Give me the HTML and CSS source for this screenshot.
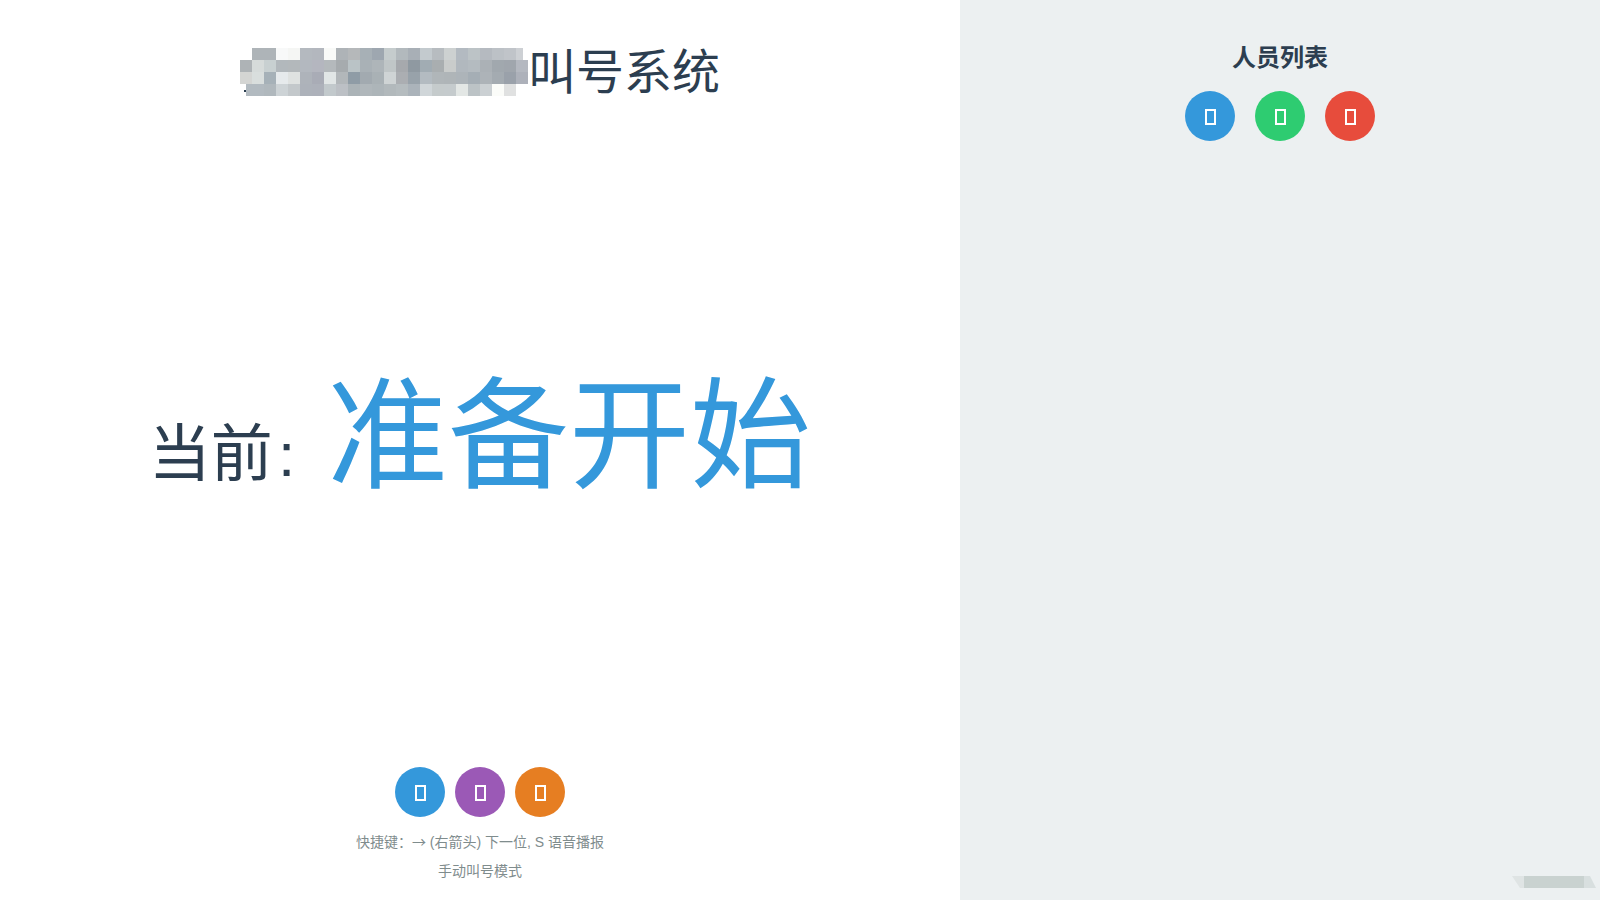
FILE: index.html
```html
<!DOCTYPE html>
<html lang="zh-CN">

<head>
  <meta charset="UTF-8" />
  <title>叫号系统</title>
  <link rel="stylesheet" href="styles.css">
</head>

<body>

  <div class="obal">
    <main class="hlavna">
      <h1 class="nadpis">
        <svg class="mozaika" width="288" height="48" viewBox="0 0 24 4" shape-rendering="crispEdges" aria-hidden="true">
          <g transform="translate(0 0)">
            <rect x="1" width="1" height="1" fill="#aeb4b8"/><rect x="2" width="1" height="1" fill="#aeb4b8"/><rect x="3" width="1" height="1" fill="#f8f9f9"/><rect x="4" width="1" height="1" fill="#f5f6f4"/><rect x="5" width="1" height="1" fill="#b4b9bf"/><rect x="6" width="1" height="1" fill="#b3b7be"/><rect x="7" width="1" height="1" fill="#f9faf8"/><rect x="8" width="1" height="1" fill="#aeb3b7"/><rect x="9" width="1" height="1" fill="#b5b8ba"/><rect x="10" width="1" height="1" fill="#a7b0b6"/><rect x="11" width="1" height="1" fill="#9ea7b0"/><rect x="12" width="1" height="1" fill="#c5cccd"/><rect x="13" width="1" height="1" fill="#b2b9bd"/><rect x="14" width="1" height="1" fill="#a8afb6"/><rect x="15" width="1" height="1" fill="#c3cace"/><rect x="16" width="1" height="1" fill="#b7bcc0"/><rect x="17" width="1" height="1" fill="#cdd1d1"/><rect x="18" width="1" height="1" fill="#b3bac1"/><rect x="19" width="1" height="1" fill="#bcc3c6"/><rect x="20" width="1" height="1" fill="#b5bac0"/><rect x="21" width="1" height="1" fill="#bcc1c6"/><rect x="22" width="1" height="1" fill="#c0c4c9"/><rect x="23" width="0.6" height="1" fill="#cdd0d4"/>
          </g>
          <g transform="translate(0 1)">
            <rect x="0" width="1" height="1" fill="#aeb3b6"/><rect x="1" width="1" height="1" fill="#d6dbda"/><rect x="2" width="1" height="1" fill="#c8d0d1"/><rect x="3" width="1" height="1" fill="#b2b8bc"/><rect x="4" width="1" height="1" fill="#b3b8bb"/><rect x="5" width="1" height="1" fill="#b3b8bf"/><rect x="6" width="1" height="1" fill="#b4b6bf"/><rect x="7" width="1" height="1" fill="#b4b9bc"/><rect x="8" width="1" height="1" fill="#a6abae"/><rect x="9" width="1" height="1" fill="#bac3c6"/><rect x="10" width="1" height="1" fill="#a9b1b6"/><rect x="11" width="1" height="1" fill="#aeb5b9"/><rect x="12" width="1" height="1" fill="#c0c6c7"/><rect x="13" width="1" height="1" fill="#a6a9ad"/><rect x="14" width="1" height="1" fill="#8f99a1"/><rect x="15" width="1" height="1" fill="#a1acb3"/><rect x="16" width="1" height="1" fill="#a9aeb0"/><rect x="17" width="1" height="1" fill="#c9cccb"/><rect x="18" width="1" height="1" fill="#b1b8be"/><rect x="19" width="1" height="1" fill="#b4bbc0"/><rect x="20" width="1" height="1" fill="#abb1b6"/><rect x="21" width="1" height="1" fill="#a1a8ae"/><rect x="22" width="1" height="1" fill="#a0a6ad"/><rect x="23" width="1" height="1" fill="#b4b8c0"/>
          </g>
          <g transform="translate(0 2)">
            <rect x="0" width="1" height="1" fill="#d4d5d3"/><rect x="1" width="1" height="1" fill="#d9dedd"/><rect x="2" width="1" height="1" fill="#a6b1b8"/><rect x="3" width="1" height="1" fill="#e6eaec"/><rect x="4" width="1" height="1" fill="#dfe2e1"/><rect x="5" width="1" height="1" fill="#aeb3ba"/><rect x="6" width="1" height="1" fill="#a9acb6"/><rect x="7" width="1" height="1" fill="#e1e6e6"/><rect x="8" width="1" height="1" fill="#b2b7ba"/><rect x="9" width="1" height="1" fill="#8f9ca6"/><rect x="10" width="1" height="1" fill="#a2aab0"/><rect x="11" width="1" height="1" fill="#a9b1b5"/><rect x="12" width="1" height="1" fill="#cfd4d5"/><rect x="13" width="1" height="1" fill="#abaeb2"/><rect x="14" width="1" height="1" fill="#98a2aa"/><rect x="15" width="1" height="1" fill="#b3bbc1"/><rect x="16" width="1" height="1" fill="#b0b6b9"/><rect x="17" width="1" height="1" fill="#afb5b8"/><rect x="18" width="1" height="1" fill="#adb4b9"/><rect x="19" width="1" height="1" fill="#a5aeb5"/><rect x="20" width="1" height="1" fill="#adb3b8"/><rect x="21" width="1" height="1" fill="#a4abb1"/><rect x="22" width="1" height="1" fill="#9aa1aa"/><rect x="23" width="1" height="1" fill="#adb1ba"/>
          </g>
          <g transform="translate(0 3)">
            <rect x="0.33" y="0.5" width="0.17" height="0.17" fill="#2c3e50"/><rect x="0.5" width="1.5" height="1" fill="#b2bac0"/><rect x="2" width="1" height="1" fill="#b0b8bd"/><rect x="3" width="1" height="1" fill="#cdd3d6"/><rect x="4" width="1" height="1" fill="#c3c8cb"/><rect x="5" width="1" height="1" fill="#adb2ba"/><rect x="6" width="1" height="1" fill="#adb1ba"/><rect x="7" width="1" height="1" fill="#c2c9cc"/><rect x="8" width="1" height="1" fill="#bcc0c5"/><rect x="9" width="1" height="1" fill="#abb3b7"/><rect x="10" width="1" height="1" fill="#b0b7bb"/><rect x="11" width="1" height="1" fill="#adb5b9"/><rect x="12" width="1" height="1" fill="#b2b9bc"/><rect x="13" width="1" height="1" fill="#b5bcbf"/><rect x="14" width="1" height="1" fill="#abb3ba"/><rect x="15" width="1" height="1" fill="#d0d6d9"/><rect x="16" width="1" height="1" fill="#c5cbcc"/><rect x="17" width="1" height="1" fill="#c5cbcd"/><rect x="18" width="1" height="1" fill="#e3e7e5"/><rect x="19" width="1" height="1" fill="#bcc3c6"/><rect x="20" width="1" height="1" fill="#cbd0d3"/><rect x="21" width="1" height="1" fill="#fbfcf9"/><rect x="22" width="1" height="1" fill="#e0e1e1"/>
          </g>
        </svg>
        <span class="nadpis-text">叫号系统</span>
      </h1>

      <div class="aktualny">
        <span class="aktualny-popis">当前<span class="dvojbodka">:</span></span>
        <span class="aktualny-meno">准备开始</span>
      </div>

      <div class="ovladanie">
        <div class="tlacidla">
          <button class="kruh modra"><span class="ikona"></span></button>
          <button class="kruh fialova"><span class="ikona"></span></button>
          <button class="kruh oranzova"><span class="ikona"></span></button>
        </div>
        <p class="pomoc">快捷键：<span class="sipka">→</span> (右箭头) 下一位, S 语音播报</p>
        <p class="pomoc">手动叫号模式</p>
      </div>
    </main>

    <aside class="panel">
      <h2 class="panel-nadpis">人员列表</h2>
      <div class="tlacidla panel-tlacidla">
        <button class="kruh modra"><span class="ikona"></span></button>
        <button class="kruh zelena"><span class="ikona"></span></button>
        <button class="kruh cervena"><span class="ikona"></span></button>
      </div>
    </aside>
  </div>

  <div class="vodoznak"></div>

</body>

</html>
```

FILE: styles.css
```css
html,
body {
  height: 100%;
}

body {
  font-family: "Liberation Sans", "Noto Sans CJK SC", sans-serif;
  color: #2c3e50;
  background-color: #fff;
  margin: 0;
  overflow: hidden;
}

.obal {
  display: flex;
  height: 100%;
}

.hlavna {
  width: 60%;
  display: flex;
  flex-direction: column;
  align-items: center;
}

.nadpis {
  display: flex;
  align-items: center;
  margin: 38px 0 0;
  font-size: 48px;
  font-weight: 400;
  line-height: 64px;
}

.nadpis-text {
  margin-top: 3px;
}

.mozaika {
  display: block;
  flex: none;
}

.aktualny {
  flex: 1;
  display: flex;
  align-items: center;
  justify-content: center;
  gap: 32px;
}

.aktualny-popis {
  font-size: 62px;
  line-height: 80px;
  margin-top: 38px;
}

.dvojbodka {
  margin-left: 5px;
}

.aktualny-meno {
  font-size: 121px;
  line-height: 160px;
  color: #3498db;
}

.ovladanie {
  display: flex;
  flex-direction: column;
  align-items: center;
  padding-bottom: 14px;
}

.tlacidla {
  display: flex;
  gap: 10px;
  margin-bottom: 10px;
}

.kruh {
  width: 50px;
  height: 50px;
  border: 0;
  border-radius: 50%;
  padding: 0;
  display: flex;
  align-items: center;
  justify-content: center;
}

.ikona {
  display: block;
  width: 11px;
  height: 16px;
  box-sizing: border-box;
  border: 2px solid #fff;
  margin-top: 1px;
}

.modra {
  background-color: #3498db;
}

.fialova {
  background-color: #9b59b6;
}

.oranzova {
  background-color: #e67e22;
}

.zelena {
  background-color: #2ecc71;
}

.cervena {
  background-color: #e74c3c;
}

.pomoc {
  margin: 0;
  font-size: 14px;
  line-height: 29px;
  color: #7f8c8d;
}

.sipka {
  font-family: "Noto Sans CJK SC", sans-serif;
}

.panel {
  width: 40%;
  background-color: #ecf0f1;
  display: flex;
  flex-direction: column;
  align-items: center;
}

.panel-nadpis {
  margin: 41px 0 0;
  font-size: 24px;
  font-weight: 700;
  line-height: 34px;
}

.panel-tlacidla {
  gap: 20px;
  margin: 16px 0 0;
}

/* rozmazany vodoznak v rohu */
.vodoznak {
  position: absolute;
  left: 1512px;
  top: 876px;
  width: 84px;
  height: 12px;
  background: linear-gradient(90deg, #dfe4e4 0 12px, #c9d2d0 12px 72px, #d8dfdf 72px);
  clip-path: polygon(0 0, 78px 0, 84px 100%, 8px 100%);
}
```
